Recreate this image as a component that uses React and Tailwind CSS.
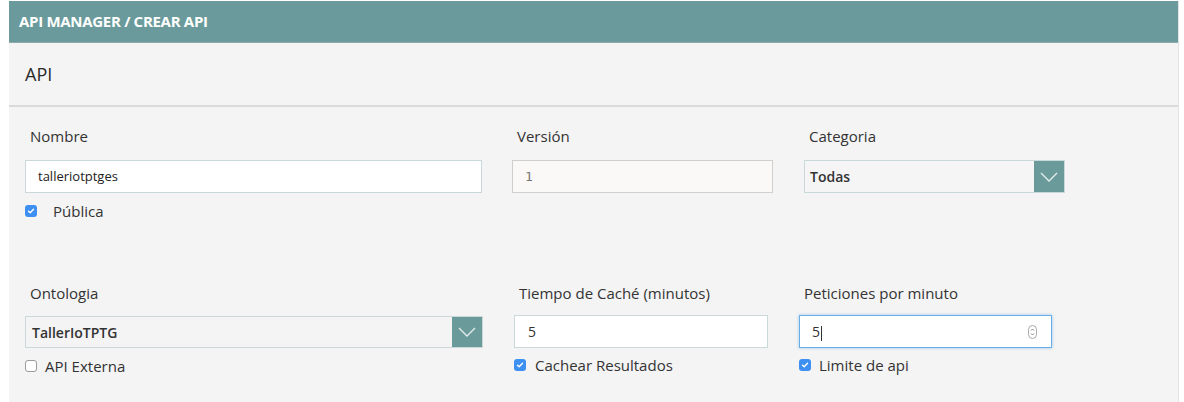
import React from 'react';

const font = { fontFamily: '"Open Sans", "Liberation Sans", sans-serif' };

const Check = ({ checked }) =>
  checked ? (
    <span className="w-[12px] h-[12px] rounded-[3px] bg-[#3d8ff2] flex items-center justify-center shrink-0">
      <svg width="8" height="8" viewBox="0 0 8 8">
        <path d="M1.5 4.2 L3.2 5.8 L6.5 2.2" stroke="#fff" strokeWidth="1.4" fill="none" strokeLinecap="round" strokeLinejoin="round" />
      </svg>
    </span>
  ) : (
    <span className="w-[12px] h-[12px] rounded-[3px] bg-white border border-[#9a9a9a] shrink-0" />
  );

const Arrow = () => (
  <span className="w-[30px] h-full bg-[#6a9a9a] flex items-center justify-center shrink-0">
    <svg width="20" height="12" viewBox="0 0 20 12">
      <path d="M2 2 L10 10 L18 2" stroke="#e4eeee" strokeWidth="1.3" fill="none" />
    </svg>
  </span>
);

const Label = ({ children }) => (
  <div className="text-[15px] text-[#333] leading-[20px] pl-[5px] h-[20px]">{children}</div>
);

export default function App() {
  return (
    <div className="w-[1184px] h-[402px] bg-white pt-[1px] pl-[9px] pr-[5px]" style={font}>
      <div className="h-full bg-[#f4f4f4] border-r border-[#e2e2e2]">
        {/* Header */}
        <div className="h-[42px] bg-[#6a9a9b] border-b border-[#8fa9a9] flex items-center pl-[10px]">
          <span className="text-white text-[15px] font-bold tracking-[-0.3px]">API MANAGER / CREAR API</span>
        </div>

        {/* Sub header */}
        <div className="h-[64px] border-b-2 border-[#dadada] flex items-center pl-[16px]">
          <span className="text-[18px] text-[#2a2a2a]">API</span>
        </div>

        {/* Row 1 */}
        <div className="flex pl-[16px] pt-[19px]">
          <div className="w-[457px]">
            <Label>Nombre</Label>
            <div className="mt-[14px] h-[33px] bg-white border border-[#c9d9d9] flex items-center pl-[12px] text-[13px] text-[#222]">
              talleriotptges
            </div>
            <div className="flex items-center mt-[12px] h-[12px]">
              <Check checked />
              <span className="ml-[16px] text-[15px] text-[#333]">Pública</span>
            </div>
          </div>

          <div className="w-[261px] ml-[30px]">
            <Label>Versión</Label>
            <div className="mt-[14px] h-[33px] bg-[#faf9f8] border border-[#cfcfcf] flex items-center pl-[12px] text-[13px] text-[#777]" style={{ fontFamily: '"DejaVu Sans Mono", monospace' }}>
              1
            </div>
          </div>

          <div className="w-[261px] ml-[31px]">
            <Label>Categoria</Label>
            <div className="mt-[14px] h-[33px] bg-[#f5f5f5] border border-[#c9d9d9] flex items-stretch">
              <span className="flex-1 flex items-center pl-[5px] text-[14px] font-semibold text-[#333]">Todas</span>
              <Arrow />
            </div>
          </div>
        </div>

        {/* Row 2 */}
        <div className="flex pl-[16px] pt-[66px]">
          <div className="w-[458px]">
            <Label>Ontologia</Label>
            <div className="mt-[13px] h-[32px] bg-[#f4f4f4] border border-[#c9d9d9] flex items-stretch">
              <span className="flex-1 flex items-center pl-[6px] text-[14px] font-semibold text-[#333]">TallerIoTPTG</span>
              <Arrow />
            </div>
            <div className="flex items-center mt-[12px] h-[12px]">
              <Check />
              <span className="ml-[8px] text-[15px] text-[#333]">API Externa</span>
            </div>
          </div>

          <div className="w-[254px] ml-[31px]">
            <Label>Tiempo de Caché (minutos)</Label>
            <div className="mt-[12px] h-[33px] bg-white border border-[#c9d9d9] flex items-center pl-[13px] text-[14px] text-[#333]">
              5
            </div>
            <div className="flex items-center mt-[11px] h-[12px]">
              <Check checked />
              <span className="ml-[9px] text-[15px] text-[#333]">Cachear Resultados</span>
            </div>
          </div>

          <div className="w-[253px] ml-[31px]">
            <Label>Peticiones por minuto</Label>
            <div className="mt-[12px] h-[33px] bg-white border border-[#6aaee8] shadow-[0_0_3px_rgba(80,150,230,0.5)] flex items-center pl-[12px] pr-[14px] text-[14px] text-[#333]">
              <span className="flex-1">5<span className="inline-block w-[1px] h-[15px] bg-[#333] align-middle ml-[1px]" /></span>
              <span className="w-[9px] h-[14px] rounded-full border border-[#aaa] flex flex-col items-center justify-center">
                <svg width="5" height="10" viewBox="0 0 5 10">
                  <path d="M1 3.5 L2.5 2 L4 3.5 M1 6.5 L2.5 8 L4 6.5" stroke="#666" strokeWidth="0.8" fill="none" />
                </svg>
              </span>
            </div>
            <div className="flex items-center mt-[11px] h-[12px]">
              <Check checked />
              <span className="ml-[8px] text-[15px] text-[#333]">Limite de api</span>
            </div>
          </div>
        </div>
      </div>
    </div>
  );
}
